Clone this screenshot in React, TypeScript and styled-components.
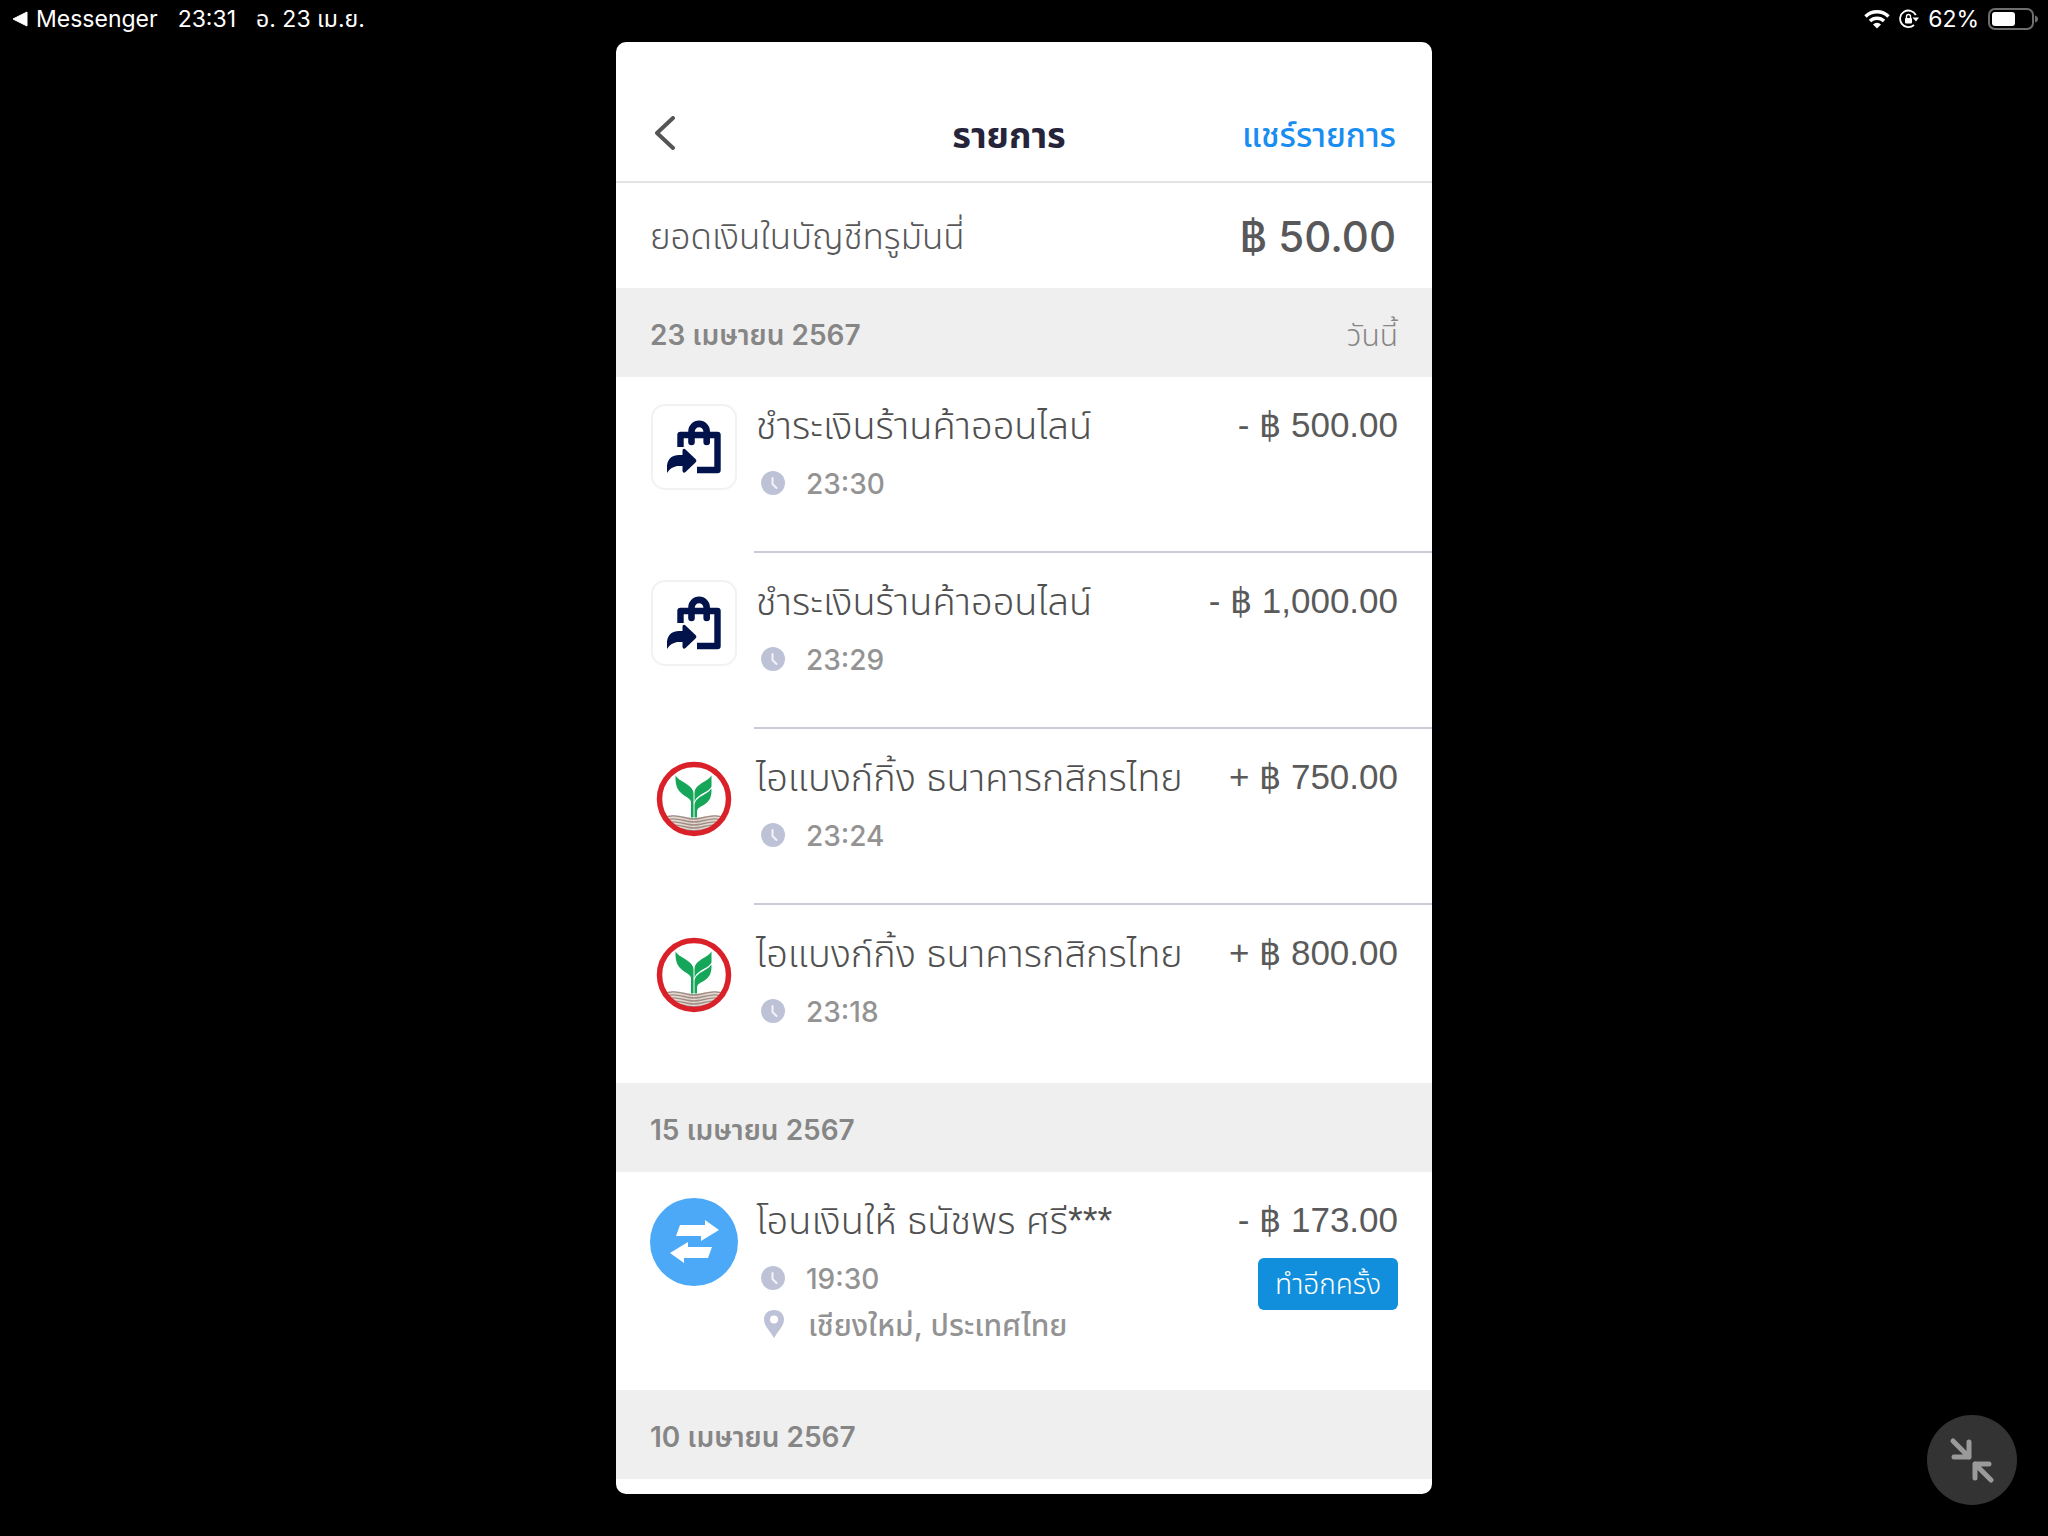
import React from "react";
import styled, { createGlobalStyle } from "styled-components";

const GlobalStyle = createGlobalStyle`
  *, *::before, *::after { box-sizing: border-box; }
  body {
    margin: 0;
    background: #000;
    font-family: Inter, "Noto Sans Thai", "Noto Sans", "Liberation Sans", sans-serif;
  }
  h1, h2, h3, p, ul { margin: 0; padding: 0; }
  ul { list-style: none; }
`;

const Screen = styled.div`
  min-height: 100vh;
  display: flex;
  flex-direction: column;
  align-items: center;
  background: #000;
`;

const StatusBar = styled.header`
  align-self: stretch;
  height: 42px;
  padding: 0 10px 4px 12px;
  display: flex;
  align-items: center;
  justify-content: space-between;
  color: #fff;
  font-size: 23px;
  line-height: 32px;
`;

const StatusGroup = styled.div<{ $gap: number }>`
  display: flex;
  align-items: center;
  gap: ${(p) => p.$gap}px;
`;

const BackToApp = styled.a`
  display: flex;
  align-items: center;
  gap: 8px;
  color: inherit;
  text-decoration: none;
`;

const Panel = styled.main`
  width: min(100%, 816px);
  padding-bottom: 15px;
  border-radius: 10px;
  background: #fff;
  overflow: hidden;
`;

const TitleBar = styled.div`
  display: grid;
  grid-template-columns: 10fr auto 11fr;
  align-items: center;
  min-height: 141px;
  padding: 46px 36px 0;
  border-bottom: 2px solid #e4e4e4;
`;

const BackButton = styled.button`
  justify-self: start;
  display: flex;
  padding: 0;
  border: 0;
  background: none;
`;

const Title = styled.h1`
  font-size: 36px;
  line-height: 48px;
  font-weight: 700;
  color: #26243a;
`;

const ShareLink = styled.a`
  justify-self: end;
  font-size: 33px;
  line-height: 48px;
  font-weight: 500;
  color: #1a8df0;
  text-decoration: none;
`;

const Balance = styled.section`
  display: flex;
  align-items: center;
  justify-content: space-between;
  min-height: 105px;
  padding: 3px 36px 0 34px;
  color: #58585a;
`;

const BalanceLabel = styled.h2`
  font-family: "Liberation Sans", "Noto Sans Thai", sans-serif;
  font-size: 35px;
  line-height: 48px;
  font-weight: 350;
`;

const BalanceValue = styled.p`
  font-size: 42px;
  line-height: 48px;
  font-weight: 500;
`;

const DayBar = styled.div`
  display: flex;
  align-items: center;
  justify-content: space-between;
  min-height: 89px;
  padding: 4px 34px 0;
  background: #efefef;
  color: #868686;
`;

const DayDate = styled.h2`
  font-size: 28px;
  line-height: 40px;
  font-weight: 600;
`;

const DayNote = styled.p`
  font-size: 30px;
  line-height: 40px;
  font-weight: 350;
`;

const Entries = styled.ul`
  padding-bottom: 2px;
`;

const Body = styled.div`
  flex: 1;
  display: flex;
  justify-content: space-between;
  padding: 22px 34px 38px 2px;
  border-bottom: 2px solid #c9cbd9;
`;

const Row = styled.li`
  display: flex;
  gap: 16px;
  min-height: 176px;
  padding-left: 34px;

  &:last-child ${Body} {
    border-bottom-color: transparent;
  }
`;

const IconSlot = styled.div`
  flex: none;
  width: 88px;
  height: 88px;
  margin-top: 26px;
  display: flex;
  align-items: center;
  justify-content: center;
`;

const Tile = styled.div`
  width: 86px;
  height: 86px;
  border: 2px solid #f2f2f4;
  border-radius: 14px;
  display: flex;
  align-items: center;
  justify-content: center;
`;

const Details = styled.div`
  display: flex;
  flex-direction: column;
`;

const Name = styled.h3`
  margin-bottom: 8px;
  font-family: "Liberation Sans", "Noto Sans Thai", sans-serif;
  font-size: 38px;
  line-height: 54px;
  font-weight: 350;
  color: #505050;
`;

const Meta = styled.p<{ $size: number }>`
  display: flex;
  align-items: center;
  gap: 20px;
  padding-left: 4px;
  min-height: 46px;
  font-size: ${(p) => p.$size}px;
  line-height: 46px;
  font-weight: 500;
  color: #939393;
`;

const Side = styled.div`
  display: flex;
  flex-direction: column;
  align-items: flex-end;
  gap: 12px;
`;

const Amount = styled.p`
  font-family: "Liberation Sans", "Noto Sans", sans-serif;
  font-size: 35px;
  line-height: 52px;
  color: #5a5a5a;
  white-space: pre;
`;

const RepeatButton = styled.button`
  min-width: 140px;
  height: 52px;
  padding: 0 14px;
  border: 0;
  border-radius: 6px;
  background: #118fdd;
  color: #fff;
  font-family: inherit;
  font-size: 28px;
  line-height: 52px;
  font-weight: 350;
`;

const ShrinkButton = styled.button`
  position: fixed;
  right: 31px;
  bottom: 31px;
  width: 90px;
  height: 90px;
  padding: 0;
  border: 0;
  border-radius: 50%;
  background: #333;
  display: flex;
  align-items: center;
  justify-content: center;
`;

const BagIcon = () => (
  <svg width="54" height="54" viewBox="0 0 54 54" fill="none" aria-hidden="true">
    <path d="M13.500 27V15h37v35H30" stroke="#02124a" strokeWidth="6.400" strokeLinejoin="round" />
    <path d="M24.500 22V11.500a7.600 7.600 0 0 1 15.200 0V22" stroke="#02124a" strokeWidth="6.600" strokeLinecap="round" />
    <path d="M0 53C-1.500 41.500 3 35 12 35h3.500v-4c0-2 1.500-3 3-1.500l10 9.500c1.200 1.200 1.200 2.400 0 3.500l-10 9.500c-1.500 1.500-3 .5-3-1.500V46H12c-5 0-8.500 2-12 7Z" fill="#02124a" />
  </svg>
);

const wave = (y: number) => `M5 ${y + 3}C18 ${y - 4} 28 ${y + 3} 38 ${y + 3}S58 ${y - 4} 71 ${y + 3}`;

const BankIcon = () => (
  <svg width="76" height="76" viewBox="0 0 76 76" fill="none" aria-hidden="true">
    <defs>
      <clipPath id="seal">
        <circle cx="38" cy="38" r="33" />
      </clipPath>
    </defs>
    <g clipPath="url(#seal)">
      <path d={`${wave(54)}V76H5Z`} fill="#e2d9d3" />
      {[55, 58, 61, 64, 67, 70].map((y) => (
        <path key={y} d={wave(y)} stroke="#a08d84" strokeWidth="1.400" />
      ))}
    </g>
    <circle cx="38" cy="38" r="34.500" stroke="#da2129" strokeWidth="5.500" />
    <path d="M19.500 14.500c3 4.500 7 5.500 11 8.500 4 2.500 6.500 5 7 9v24.500h-2.500V41c-.5-3-3-4-6-6-6-4-10-8-9.500-20.500Z" fill="#16a65a" />
    <path d="M55.500 14.500c-3 4.500-7 5.500-11 8.500-4 2.500-6 5-6 9v8.500c1.500-4 5-6 9-8.500 4-2 7-4 8-6.500Z" fill="#16a65a" />
    <path d="M55.500 27.500c-2 3-5 4.500-9 7-5 3-7.500 5-8 9.500v12.500h2.500V50c.5-3 3-4 6-5.500 5-3 9-6.500 8.500-17Z" fill="#16a65a" />
  </svg>
);

const TransferIcon = () => (
  <svg width="88" height="88" viewBox="0 0 88 88" aria-hidden="true">
    <circle cx="44" cy="44" r="44" fill="#4ba9f8" />
    <path d="M30 27h25v-5l14 10-18 11v-5H26Z" fill="#fff" />
    <path d="M62 49H38v-5L20 55l14 10v-5h24Z" fill="#fff" />
  </svg>
);

const ClockIcon = () => (
  <svg width="26" height="26" viewBox="0 0 26 26" fill="none" aria-hidden="true">
    <circle cx="13" cy="12" r="12" fill="#bec2d7" />
    <path d="M12.500 7v6l4 4" stroke="#f4f5fa" strokeWidth="2" strokeLinecap="round" />
  </svg>
);

const PinIcon = () => (
  <svg width="28" height="30" viewBox="0 0 28 30" aria-hidden="true">
    <path fillRule="evenodd" d="M14 0C8 0 4 4 4 9.500 4 16 10 21 14 28c4-7 10-12 10-18.500C24 4 20 0 14 0Zm0 5.500a4 4 0 1 1 0 8 4 4 0 0 1 0-8Z" fill="#bec2d7" />
  </svg>
);

type Kind = "shop" | "bank" | "transfer";

const KindIcon = ({ kind }: { kind: Kind }) => {
  if (kind === "shop") return <Tile><BagIcon /></Tile>;
  if (kind === "bank") return <BankIcon />;
  return <TransferIcon />;
};

type Entry = { kind: Kind; name: string; time: string; amount: string; place?: string; repeat?: boolean };
type Day = { date: string; note?: string; entries: Entry[] };

const days: Day[] = [
  {
    date: "23 เมษายน 2567",
    note: "วันนี้",
    entries: [
      { kind: "shop", name: "ชำระเงินร้านค้าออนไลน์", time: "23:30", amount: "- ฿ 500.00" },
      { kind: "shop", name: "ชำระเงินร้านค้าออนไลน์", time: "23:29", amount: "- ฿ 1,000.00" },
      { kind: "bank", name: "ไอแบงก์กิ้ง ธนาคารกสิกรไทย", time: "23:24", amount: "+ ฿ 750.00" },
      { kind: "bank", name: "ไอแบงก์กิ้ง ธนาคารกสิกรไทย", time: "23:18", amount: "+ ฿ 800.00" },
    ],
  },
  {
    date: "15 เมษายน 2567",
    entries: [
      { kind: "transfer", name: "โอนเงินให้ ธนัชพร ศรี***", time: "19:30", amount: "- ฿ 173.00", place: "เชียงใหม่, ประเทศไทย", repeat: true },
    ],
  },
  { date: "10 เมษายน 2567", entries: [] },
];

export default function App() {
  return (
    <Screen>
      <GlobalStyle />
      <StatusBar>
        <StatusGroup $gap={20}>
          <BackToApp href="#messenger">
            <svg width="16" height="16" viewBox="0 0 16 16" aria-hidden="true">
              <path d="M1 8 15 1v14Z" fill="#fff" stroke="#fff" strokeLinejoin="round" />
            </svg>
            Messenger
          </BackToApp>
          <span>23:31</span>
          <span>อ. 23 เม.ย.</span>
        </StatusGroup>
        <StatusGroup $gap={9}>
          <svg width="26" height="20" viewBox="0 0 26 20" fill="none" stroke="#fff" aria-hidden="true">
            <path d="M1.500 7.500a16.500 16.500 0 0 1 23 0" strokeWidth="3.500" />
            <path d="M6 12a10 10 0 0 1 14 0" strokeWidth="3.500" />
            <path d="M13 19.500 9 15.500a5.500 5.500 0 0 1 8 0Z" fill="#fff" stroke="none" />
          </svg>
          <svg width="20" height="20" viewBox="0 0 20 20" fill="none" stroke="#fff" aria-hidden="true">
            <path d="M16.800 6A8.300 8.300 0 1 0 15 16" strokeWidth="1.800" />
            <path d="M13.500 8.500H20L17 12.500Z" fill="#fff" stroke="none" />
            <rect x="6" y="9" width="7" height="5.500" rx="1" fill="#fff" stroke="none" />
            <path d="M7.500 9V7.500a2 2 0 0 1 4 0V9" strokeWidth="1.400" />
          </svg>
          <span>62%</span>
          <svg width="50" height="22" viewBox="0 0 50 22" aria-hidden="true">
            <rect x="1" y="1" width="44" height="20" rx="6" fill="none" stroke="#6e6e6e" strokeWidth="2" />
            <rect x="4" y="4" width="23" height="14" rx="3" fill="#fff" />
            <path d="M47 7.500q3 1 3 3.500t-3 3.500Z" fill="#6e6e6e" />
          </svg>
        </StatusGroup>
      </StatusBar>

      <Panel>
        <TitleBar>
          <BackButton aria-label="ย้อนกลับ">
            <svg width="26" height="38" viewBox="0 0 26 38" fill="none" aria-hidden="true">
              <path d="M21 2 5 17l16 15" stroke="#555" strokeWidth="4" strokeLinecap="round" strokeLinejoin="round" />
            </svg>
          </BackButton>
          <Title>รายการ</Title>
          <ShareLink href="#share">แชร์รายการ</ShareLink>
        </TitleBar>

        <Balance>
          <BalanceLabel>ยอดเงินในบัญชีทรูมันนี่</BalanceLabel>
          <BalanceValue>฿ 50.00</BalanceValue>
        </Balance>

        {days.map((day) => (
          <section key={day.date}>
            <DayBar>
              <DayDate>{day.date}</DayDate>
              {day.note && <DayNote>{day.note}</DayNote>}
            </DayBar>
            {day.entries.length > 0 && (
              <Entries>
                {day.entries.map((e) => (
                  <Row key={e.time}>
                    <IconSlot><KindIcon kind={e.kind} /></IconSlot>
                    <Body>
                      <Details>
                        <Name>{e.name}</Name>
                        <Meta $size={28}><ClockIcon />{e.time}</Meta>
                        {e.place && <Meta $size={30}><PinIcon />{e.place}</Meta>}
                      </Details>
                      <Side>
                        <Amount>{e.amount}</Amount>
                        {e.repeat && <RepeatButton>ทำอีกครั้ง</RepeatButton>}
                      </Side>
                    </Body>
                  </Row>
                ))}
              </Entries>
            )}
          </section>
        ))}
      </Panel>

      <ShrinkButton aria-label="ย่อหน้าจอ">
        <svg width="46" height="46" viewBox="0 0 46 46" fill="none" stroke="#9a9a9a" strokeWidth="5" strokeLinecap="round" strokeLinejoin="round" aria-hidden="true">
          <path d="M4 4l16 16M20 5v15H5" />
          <path d="M42 43 26 27M26 41V27h14" />
        </svg>
      </ShrinkButton>
    </Screen>
  );
}
